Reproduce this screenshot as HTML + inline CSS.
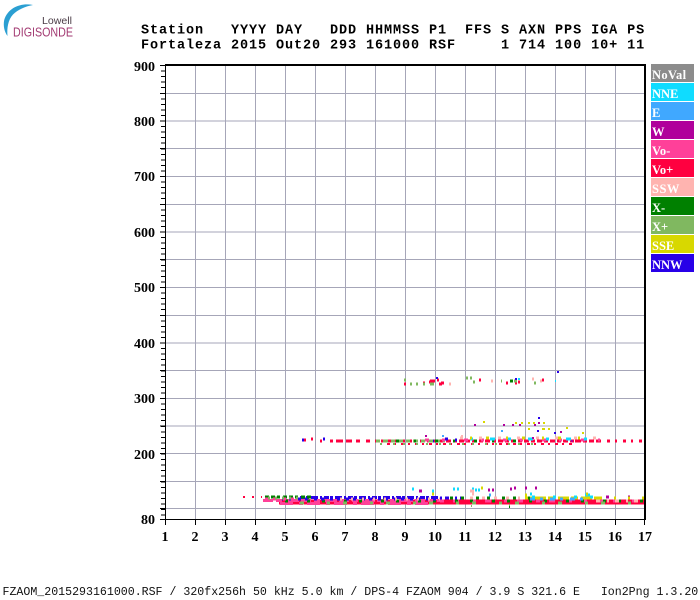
<!DOCTYPE html>
<html><head><meta charset="utf-8"><title>Ionogram</title>
<style>
html,body{margin:0;padding:0;background:#fff}
svg{display:block}
.m{font-family:"Liberation Mono",monospace;white-space:pre}
.h{font-size:13.5px;font-weight:bold;letter-spacing:.9px;fill:#000}
.f{font-size:11.6px;fill:#111}
.a{font-family:"Liberation Serif",serif;font-size:14px;font-weight:bold;fill:#000}
.l{font-family:"Liberation Serif",serif;font-size:12.5px;font-weight:bold;fill:#fff}
</style></head><body>
<svg width="700" height="600" viewBox="0 0 700 600" xmlns="http://www.w3.org/2000/svg">
<rect width="700" height="600" fill="#fff"/>

<!-- logo -->
<path d="M33 5C22 2.500 8 7 4.200 20C3 26 4.500 32 7.500 36C6.800 28 8 20 13 14.500C18 9.500 25 6.500 33 5Z" fill="#2b9fd2"/>
<text x="42" y="24" font-family="Liberation Sans,sans-serif" font-size="10.500" fill="#4a3c46" textLength="30" lengthAdjust="spacingAndGlyphs">Lowell</text>
<text x="13" y="36.500" font-family="Liberation Sans,sans-serif" font-size="12.500" fill="#a23a72" textLength="60" lengthAdjust="spacingAndGlyphs">DIGISONDE</text>

<!-- header -->
<text class="m h" x="141" y="33.500">Station   YYYY DAY   DDD HHMMSS P1  FFS S AXN PPS IGA PS</text>
<text class="m h" x="141" y="48.500">Fortaleza 2015 Out20 293 161000 RSF     1 714 100 10+ 11</text>

<!-- grid -->
<g stroke="#a6a6b8" stroke-width="1" shape-rendering="crispEdges" fill="none">
<path d="M195.500 65V519M225.500 65V519M255.500 65V519M285.500 65V519M315.500 65V519M345.500 65V519M375.500 65V519M405.500 65V519M435.500 65V519M465.500 65V519M495.500 65V519M525.500 65V519M555.500 65V519M585.500 65V519M615.500 65V519"/>
<path d="M165 93.500H645M165 121H645M165 148.500H645M165 176.500H645M165 204.500H645M165 232H645M165 259.500H645M165 287.500H645M165 315.500H645M165 343H645M165 370.500H645M165 398.500H645M165 426H645M165 453.500H645M165 481.500H645M165 508.500H645"/>
</g>

<!-- data -->
<g fill="none" stroke-width="3" shape-rendering="crispEdges">
<!-- main low band -->
<path stroke="#ff0040" stroke-width="5" d="M279 502H644"/>
<path stroke="#ff4099" stroke-width="3" stroke-dasharray="10 3 6 3 14 2" d="M263 500.500H440"/>
<path stroke="#ff4099" stroke-width="3" stroke-dasharray="13 6 4 4" d="M280 503.500H430"/>
<path stroke="#ff4099" stroke-width="3" stroke-dasharray="4 9 6 13" d="M440 501H644"/>
<path stroke="#008000" stroke-dasharray="3 19 3 12" d="M285 501H644"/>
<path stroke="#80b860" stroke-dasharray="4 23 3 13" d="M300 503H644"/>
<path stroke="#ffb4b0" stroke-dasharray="4 7 2 6" d="M596 501H644"/>
<path stroke="#d8d800" stroke-dasharray="7 3 11 2" d="M525 498H600"/>
<path stroke="#40a8ff" stroke-dasharray="5 5 3 7" d="M530 499H590"/>
<path stroke="#0fdcff" stroke-dasharray="3 18" d="M532 497H592"/>
<path stroke="#2800e8" stroke-dasharray="5 1 3 2 7 2 2 2" d="M300 497.500H440"/>
<path stroke="#2800e8" stroke-dasharray="3 4 3 6" d="M282 499H440"/>
<path stroke="#ffb4b0" stroke-dasharray="2 9" d="M340 499H440"/>
<path stroke="#008000" stroke-dasharray="4 2 4 2 3 3" d="M265 497H312"/>
<path stroke="#ff4099" stroke-dasharray="3 5 3 7" d="M265 499H300"/>
<path stroke="#80b860" stroke-dasharray="2 5" d="M268 498H300"/>
<path stroke="#ff0040" stroke-width="2" stroke-dasharray="2 7" d="M243 497H262"/>
<path stroke="#2800e8" stroke-dasharray="2 3 4 6" d="M440 498H470"/>
<path stroke="#008000" stroke-dasharray="3 8 3 12" d="M450 498H530"/>
<path stroke="#b0009b" stroke-dasharray="2 14 3 19" d="M590 497H640"/>
<path stroke="#d8d800" stroke-dasharray="2 12" d="M600 498H644"/>
<path stroke="#ffb4b0" stroke-dasharray="3 9" d="M470 498H520"/>
<path stroke="#0fdcff" d="M412 489h2M432 491h2M453 489h2M457 489h2M472 489h2M475 490h2M478 490h2M530 494h2M590 497h3M585 495h5"/>
<path stroke="#b0009b" d="M488 490h2M492 490h2M510 489h2M514 488h2M525 488h2M535 488h2M419 491h3"/>
<path stroke="#ffb4b0" d="M470 491h4M472 494h2"/>
<path stroke="#d8d800" d="M481 488h2M525 495h2M586 494h2M432 494h2"/>
<path stroke="#40a8ff" d="M489 495h2"/>
<path stroke="#80b860" stroke-width="2" d="M471 506h1M509 505h1"/>
<path stroke="#008000" stroke-width="2" d="M509 507h1"/>
<!-- F band -->
<path stroke="#ff0040" d="M304 440h2M311 439h2M320 441h2M330 441h3M336 441h7M346 441h6M356 441h4M366 441h4"/>
<path stroke="#ff0040" stroke-dasharray="4 2 5 2" d="M375 441H600"/>
<path stroke="#ff0040" stroke-width="2" stroke-dasharray="2 5 3 4" d="M380 444H575"/>
<path stroke="#ff0040" stroke-dasharray="3 5 2 6" d="M575 441H642"/>
<path stroke="#2800e8" d="M302 440h2M323 439h2M431 441h3M445 439h3M455 440h2"/>
<path stroke="#80b860" stroke-dasharray="4 3 5 3" d="M376 441H445"/>
<path stroke="#80b860" stroke-width="2" stroke-dasharray="2 11 2 8" d="M380 444H540"/>
<path stroke="#008000" stroke-dasharray="3 15 2 19" d="M396 441H520"/>
<path stroke="#ff4099" stroke-dasharray="4 13 3 19" d="M425 440H600"/>
<path stroke="#0fdcff" stroke-dasharray="3 17 5 13" d="M470 439H590"/>
<path stroke="#ffb4b0" stroke-dasharray="3 16" d="M460 438H600"/>
<path stroke="#d8d800" stroke-dasharray="2 14 3 17" d="M470 438H582"/>
<path stroke="#b0009b" stroke-width="2" d="M425 436h2M532 438h2M571 441h2M560 432h2M512 425h2M519 425h2M534 425h2M538 423h2M474 425h2M503 425h2"/>
<path stroke="#d8d800" stroke-width="2" d="M483 422h2M515 423h2M521 423h2M528 423h2M533 423h2M543 423h2M528 429h2M542 429h3M548 429h2M566 428h2M582 433h2"/>
<path stroke="#2800e8" stroke-width="2" d="M537 431h2M554 433h2M538 418h2"/>
<path stroke="#40a8ff" stroke-width="2" d="M501 431h2M442 436h2"/>
<path stroke="#ffb4b0" stroke-width="2" d="M461 426h1M461 436h2"/>
<!-- 2F band -->
<path stroke="#ff0040" d="M404 384h2M423 383h2M429 382h3M437 380h2M441 383h3M479 380h2M506 383h2M515 383h2M518 382h2M542 380h2"/>
<path stroke="#80b860" d="M404 380h2M410 384h2M416 384h2M423 384h2M430 384h4M466 378h2M470 378h2M473 382h2M501 381h1M514 381h3M534 383h2"/>
<path stroke="#ff0040" d="M430 381h5M439 384h3"/>
<path stroke="#ffb4b0" d="M449 384h2M491 381h2M532 379h2M540 381h2"/>
<path stroke="#008000" d="M510 381h3"/>
<path stroke="#2800e8" stroke-width="2" d="M436 378h2M515 379h2M557 372h2"/>
<path stroke="#0fdcff" stroke-width="2" d="M518 379h2M555 381h1"/>
</g>

<!-- frame -->
<g shape-rendering="crispEdges" fill="#000">
<rect x="165" y="64" width="481" height="2"/>
<rect x="165" y="64" width="1" height="456"/>
<rect x="644" y="64" width="2" height="456"/>
<rect x="160" y="519" width="486" height="1"/>
</g>
<!-- y ticks -->
<g stroke="#000" stroke-width="1" shape-rendering="crispEdges" fill="none">
<path d="M160 65.500H165M160 93.500H165M160 121H165M160 148.500H165M160 176.500H165M160 204.500H165M160 232H165M160 259.500H165M160 287.500H165M160 315.500H165M160 343H165M160 370.500H165M160 398.500H165M160 426H165M160 453.500H165M160 481.500H165M160 508.500H165"/>
<path stroke-width="4" stroke-dasharray="1 4.550" d="M163 65V520"/>
<path d="M165.500 520v5M195.500 520v5M225.500 520v5M255.500 520v5M285.500 520v5M315.500 520v5M345.500 520v5M375.500 520v5M405.500 520v5M435.500 520v5M465.500 520v5M495.500 520v5M525.500 520v5M555.500 520v5M585.500 520v5M615.500 520v5M644.500 520v5"/>
</g>

<!-- y labels -->
<g class="a" text-anchor="end">
<text x="155" y="71">900</text><text x="155" y="126">800</text><text x="155" y="181">700</text><text x="155" y="237">600</text><text x="155" y="292">500</text><text x="155" y="348">400</text><text x="155" y="403">300</text><text x="155" y="459">200</text><text x="155" y="524">80</text>
</g>
<!-- x labels -->
<g class="a" text-anchor="middle">
<text x="165" y="541">1</text><text x="195" y="541">2</text><text x="225" y="541">3</text><text x="255" y="541">4</text><text x="285" y="541">5</text><text x="315" y="541">6</text><text x="345" y="541">7</text><text x="375" y="541">8</text><text x="405" y="541">9</text><text x="435" y="541">10</text><text x="465" y="541">11</text><text x="495" y="541">12</text><text x="525" y="541">13</text><text x="555" y="541">14</text><text x="585" y="541">15</text><text x="615" y="541">16</text><text x="645" y="541">17</text>
</g>

<!-- legend -->
<g shape-rendering="crispEdges">
<rect x="651" y="64" width="43" height="18" fill="#8c8c8c"/>
<rect x="651" y="83" width="43" height="18" fill="#0fdcff"/>
<rect x="651" y="102" width="43" height="18" fill="#40a8ff"/>
<rect x="651" y="121" width="43" height="18" fill="#b0009b"/>
<rect x="651" y="140" width="43" height="18" fill="#ff4099"/>
<rect x="651" y="159" width="43" height="18" fill="#ff0040"/>
<rect x="651" y="178" width="43" height="18" fill="#ffb4b0"/>
<rect x="651" y="197" width="43" height="18" fill="#008000"/>
<rect x="651" y="216" width="43" height="18" fill="#80b860"/>
<rect x="651" y="235" width="43" height="18" fill="#d8d800"/>
<rect x="651" y="254" width="43" height="18" fill="#2800e8"/>
</g>
<g class="l">
<text x="652" y="79" letter-spacing=".3">NoVal</text>
<text x="652" y="98">NNE</text>
<text x="652" y="117">E</text>
<text x="652" y="136">W</text>
<text x="652" y="155">Vo-</text>
<text x="652" y="174">Vo+</text>
<text x="652" y="193" letter-spacing=".5">SSW</text>
<text x="652" y="212">X-</text>
<text x="652" y="231">X+</text>
<text x="652" y="250">SSE</text>
<text x="652" y="269">NNW</text>
</g>

<!-- footer -->
<text class="m f" x="2.500" y="595">FZAOM_2015293161000.RSF / 320fx256h 50 kHz 5.0 km / DPS-4 FZAOM 904 / 3.9 S 321.6 E   Ion2Png 1.3.20</text>
</svg>
</body></html>
